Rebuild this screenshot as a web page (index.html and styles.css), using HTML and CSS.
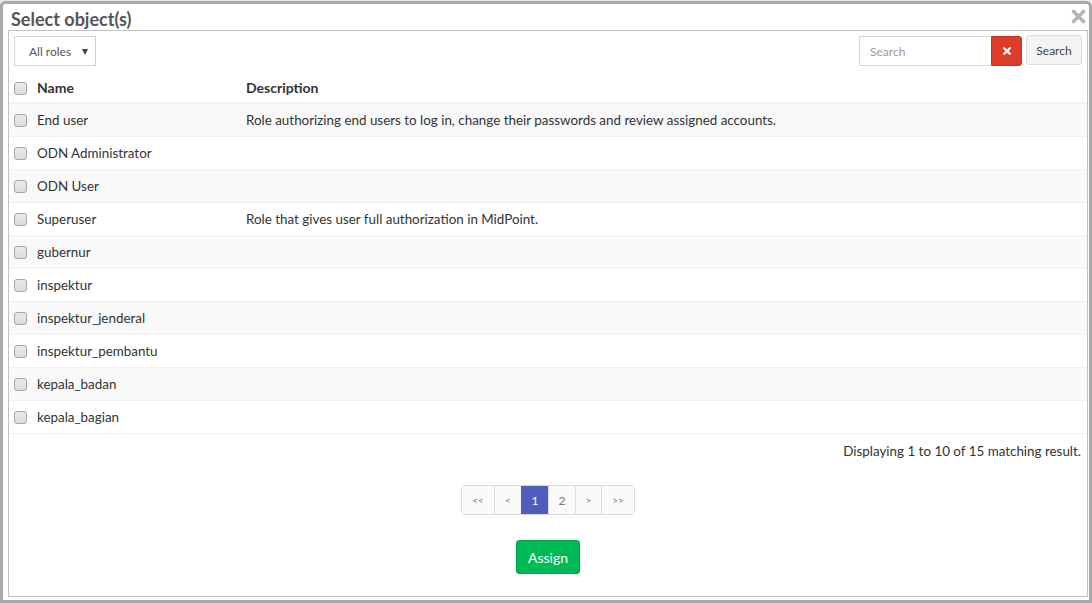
FILE: index.html
```html
<!DOCTYPE html>
<html>
<head>
<meta charset="utf-8">
<link rel="stylesheet" href="styles.css">
</head>
<body>
<div class="window">
  <div class="titlebar">
    <span class="title">Select object(s)</span>
    <span class="close" aria-label="close">
      <svg width="15" height="15" viewBox="0 0 15 15"><path d="M2.5 2.5 L12.5 12.5 M12.5 2.5 L2.5 12.5" stroke="#b4b4b4" stroke-width="3.6" stroke-linecap="round"/></svg>
    </span>
  </div>
  <div class="panel">
    <div class="toolbar">
      <div class="select"><span>All roles</span><span class="caret"></span></div>
      <div class="search-group">
        <div class="search-input">Search</div>
        <button class="btn-clear"><svg width="8" height="8" viewBox="0 0 8 8"><path d="M1.2 1.2 L6.8 6.8 M6.8 1.2 L1.2 6.8" stroke="#fff" stroke-width="2.2" stroke-linecap="round"/></svg></button>
        <button class="btn-search">Search</button>
      </div>
    </div>
    <table class="grid">
      <thead>
        <tr><th class="chk"><span class="cb"></span></th><th class="name">Name</th><th>Description</th></tr>
      </thead>
      <tbody>
        <tr><td class="chk"><span class="cb"></span></td><td>End user</td><td>Role authorizing end users to log in, change their passwords and review assigned accounts.</td></tr>
        <tr><td class="chk"><span class="cb"></span></td><td>ODN Administrator</td><td></td></tr>
        <tr><td class="chk"><span class="cb"></span></td><td>ODN User</td><td></td></tr>
        <tr><td class="chk"><span class="cb"></span></td><td>Superuser</td><td>Role that gives user full authorization in MidPoint.</td></tr>
        <tr><td class="chk"><span class="cb"></span></td><td>gubernur</td><td></td></tr>
        <tr><td class="chk"><span class="cb"></span></td><td>inspektur</td><td></td></tr>
        <tr><td class="chk"><span class="cb"></span></td><td>inspektur_jenderal</td><td></td></tr>
        <tr><td class="chk"><span class="cb"></span></td><td>inspektur_pembantu</td><td></td></tr>
        <tr><td class="chk"><span class="cb"></span></td><td>kepala_badan</td><td></td></tr>
        <tr><td class="chk"><span class="cb"></span></td><td>kepala_bagian</td><td></td></tr>
      </tbody>
    </table>
    <div class="count">Displaying 1 to 10 of 15 matching result.</div>
    <div class="pager">
      <span class="pg w33">&lt;&lt;</span><span class="pg">&lt;</span><span class="pg active">1</span><span class="pg num">2</span><span class="pg w26">&gt;</span><span class="pg w33">&gt;&gt;</span>
    </div>
    <div class="actions"><button class="btn-assign">Assign</button></div>
  </div>
</div>
</body>
</html>
```

FILE: styles.css
```css
* { box-sizing: border-box; }
html, body { margin: 0; padding: 0; }
body {
  background: #e8e8e8;
  font-family: "Lato", "Liberation Sans", sans-serif;
  font-size: 13.4px;
  color: #333;
  height: 603px;
  overflow: hidden;
  padding-top: 1px;
}
.window {
  width: 1092px;
  height: 602px;
  background: #fff;
  border: 3px solid #a8a8a8;
  border-radius: 5px 6px 0 0;
  display: flex;
  flex-direction: column;
}
.titlebar {
  height: 26px;
  display: flex;
  align-items: center;
  justify-content: space-between;
  padding: 0 3px 0 8px;
}
.title {
  font-weight: bold;
  font-size: 18px;
  color: #555;
  margin-top: 3px;
}
.close { display: flex; margin-top: -2px; }
.panel {
  flex: 1;
  margin: 0 1px 3px 5px;
  border: 1px solid #c2c2c2;
  padding: 5px 0 0 0;
  display: flex;
  flex-direction: column;
}
.toolbar {
  display: flex;
  justify-content: space-between;
  align-items: flex-start;
  padding: 0 5px;
}
.select {
  width: 82px;
  height: 30px;
  border: 1px solid #d2d2de;
  display: flex;
  align-items: center;
  padding-left: 14px;
  font-size: 12px;
  color: #555;
  position: relative;
}
.caret {
  position: absolute;
  right: 7px;
  top: 12px;
  width: 0; height: 0;
  border-left: 3.5px solid transparent;
  border-right: 3.5px solid transparent;
  border-top: 6px solid #444;
}
.search-group { display: flex; align-items: flex-start; }
.search-input {
  width: 132px;
  height: 30px;
  border: 1px solid #d2d6de;
  border-right: none;
  padding: 0 10px;
  display: flex;
  align-items: center;
  font-size: 12px;
  color: #999;
}
.btn-clear {
  width: 31px;
  height: 30px;
  background: #dd3c2a;
  border: 1px solid #c93222;
  border-radius: 0 3px 3px 0;
  display: flex;
  align-items: center;
  justify-content: center;
  padding: 0;
}
.btn-search {
  margin-left: 4px;
  margin-top: -1px;
  width: 56px;
  height: 30px;
  background: #f4f4f4;
  border: 1px solid #ddd;
  border-radius: 3px;
  font-family: inherit;
  font-size: 12px;
  color: #444;
  padding: 0;
}
.grid {
  margin-top: 6px;
  width: 100%;
  border-collapse: collapse;
}
.grid th, .grid td {
  text-align: left;
  padding: 8px 5px 8px 5px;
  line-height: 16px;
  vertical-align: middle;
}
.grid th {
  font-weight: bold;
  font-size: 14px;
  padding: 8px 5px 6px 5px;
  border-bottom: 2px solid #f4f4f4;
}
.grid td { border-top: 1px solid #f2f2f2; }
.grid tbody tr:last-child td { border-bottom: 1px solid #f2f2f2; }
.grid tbody tr:nth-child(odd) { background: #f9f9f9; }
.grid .chk { width: 23px; padding-right: 0; }
.grid tr > :nth-child(2) { width: 209px; }
.cb {
  display: block;
  width: 13px;
  height: 13px;
  border: 1px solid #a6a6a6;
  border-radius: 3px;
  background: linear-gradient(#eaeaea, #dcdcdc);
}
.count {
  text-align: right;
  padding: 8px 6px 0 0;
  line-height: 18px;
}
.pager {
  margin: 25px auto 0;
  display: flex;
  border: 1px solid #ddd;
  border-radius: 3px;
  overflow: hidden;
}
.pg {
  height: 28px;
  width: 27px;
  padding: 0;
  display: flex;
  align-items: center;
  justify-content: center;
  background: #fafafa;
  color: #777;
  font-size: 10px;
  border-left: 1px solid #ddd;
}
.pg:first-child { border-left: none; }
.pg.w33 { width: 33px; }
.pg.w26 { width: 26px; }
.pg:first-child.w33 { width: 32px; }
.pg.num, .pg.active { font-size: 12px; }
.pg.active { background: #4e5dbc; color: #fff; border-left-color: #4e5dbc; }
.actions {
  margin-top: 25px;
  display: flex;
  justify-content: center;
}
.btn-assign {
  width: 64px;
  height: 34px;
  background: #00bb55;
  border: 1px solid #00a64b;
  border-radius: 3px;
  color: #fff;
  font-family: inherit;
  font-size: 14px;
  padding: 0;
}
```
